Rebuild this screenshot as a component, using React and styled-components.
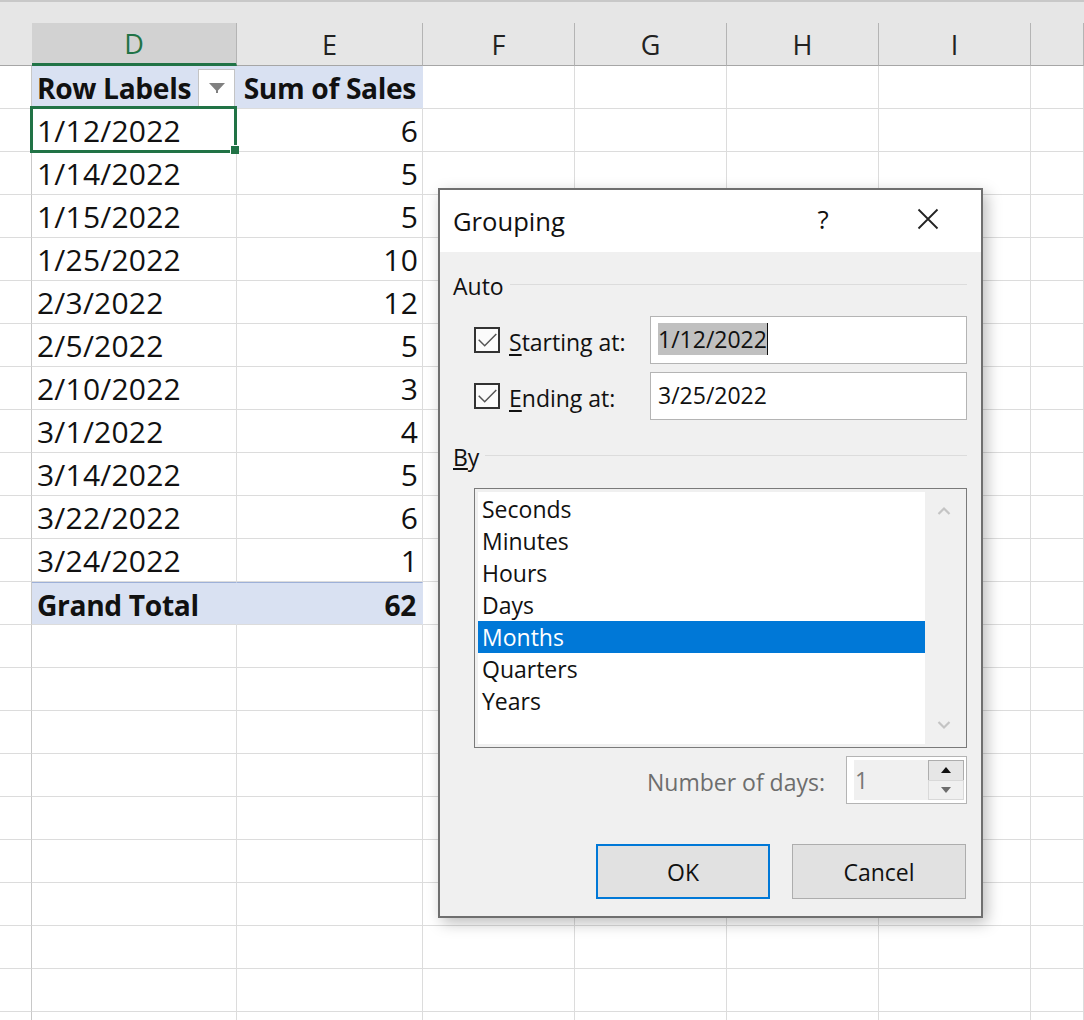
import React from 'react'
import styled, { createGlobalStyle } from 'styled-components'

const COLUMNS = ['D', 'E', 'F', 'G', 'H', 'I', '']
const ROWS = [
  ['1/12/2022', '6'],
  ['1/14/2022', '5'],
  ['1/15/2022', '5'],
  ['1/25/2022', '10'],
  ['2/3/2022', '12'],
  ['2/5/2022', '5'],
  ['2/10/2022', '3'],
  ['3/1/2022', '4'],
  ['3/14/2022', '5'],
  ['3/22/2022', '6'],
  ['3/24/2022', '1'],
]
const EMPTY_BELOW = 10
const UNITS = ['Seconds', 'Minutes', 'Hours', 'Days', 'Months', 'Quarters', 'Years']

const GlobalStyle = createGlobalStyle`
  html, body { margin: 0; padding: 0; background: #fff; }
  body { width: 1084px; height: 1020px; overflow: hidden; font-family: "Open Sans", "Noto Sans", sans-serif; }
`

const Page = styled.div`
  position: relative;
  width: 1084px;
  height: 1020px;
  overflow: hidden;
  background: #fff;
`

const TopStrip = styled.div`
  height: 23px;
  background: #e6e6e6;
  border-top: 2px solid #c8c8c8;
  box-sizing: border-box;
`

const Sheet = styled.div`
  display: grid;
  grid-template-columns: 32px 205px 186px 152px 152px 152px 152px 53px;
  grid-auto-rows: 43px;
`

const Corner = styled.div`
  background: #e6e6e6;
  border-bottom: 1px solid #a6a6a6;
`

const ColumnHead = styled.div`
  display: flex;
  align-items: center;
  justify-content: center;
  box-sizing: border-box;
  font-size: 27px;
  background: ${p => (p.$active ? '#d2d2d2' : '#e6e6e6')};
  color: ${p => (p.$active ? '#217346' : '#222')};
  border-right: 1px solid #b4b4b4;
  border-bottom: ${p => (p.$active ? '3px solid #217346' : '1px solid #a6a6a6')};
`

const RowHead = styled.div`
  border-right: 1px solid #c8c8c8;
  border-bottom: 1px solid #dcdcdc;
  background: #fff;
`

const Cell = styled.div`
  position: relative;
  display: flex;
  align-items: center;
  box-sizing: border-box;
  padding: ${p => (p.$bold ? '2px 6px 0 5px' : '0 4px 0 5px')};
  font-size: ${p => (p.$bold ? 28.2 : 30)}px;
  letter-spacing: ${p => (p.$bold ? -0.35 : 0.2)}px;
  color: #111;
  white-space: nowrap;
  justify-content: ${p => (p.$right ? 'flex-end' : 'flex-start')};
  font-weight: ${p => (p.$bold ? 700 : 400)};
  background: ${p => p.$fill || '#fff'};
  border-right: 1px solid ${p => (p.$fill ? p.$fill : '#dcdcdc')};
  border-bottom: 1px solid #dcdcdc;
  border-top: ${p => (p.$topRule ? '1px solid #9db0d8' : 'none')};
`

const FilterButton = styled.span`
  position: absolute;
  right: 1px;
  top: 3px;
  width: 37px;
  height: 37px;
  display: flex;
  align-items: center;
  justify-content: center;
  box-sizing: border-box;
  background: #fff;
  border: 1px solid #c4c4c4;
  border-bottom: none;
`

const FilterIcon = styled.svg`
  width: 16px;
  height: 10px;
`

const Selection = styled.div`
  position: absolute;
  z-index: 2;
  left: -2px;
  top: -3px;
  right: -1px;
  bottom: -2px;
  border: 3px solid #217346;
  pointer-events: none;

  &::after {
    content: '';
    position: absolute;
    right: -5px;
    bottom: -4px;
    width: 9px;
    height: 9px;
    background: #217346;
    box-sizing: border-box;
    border-left: 1px solid #fff;
    border-top: 1px solid #fff;
  }
`

const Dialog = styled.div`
  position: absolute;
  z-index: 3;
  left: 438px;
  top: 188px;
  width: 545px;
  height: 730px;
  box-sizing: border-box;
  display: flex;
  flex-direction: column;
  background: #f0f0f0;
  border: 2px solid #6f6f6f;
  box-shadow: 4px 5px 14px rgba(0, 0, 0, 0.26);
  color: #111;
  font-size: 23px;
`

const TitleBar = styled.div`
  height: 62px;
  flex: none;
  display: flex;
  align-items: center;
  background: #fff;
  padding-left: 13px;
`

const Title = styled.div`
  font-size: 25.6px;
  flex: 1;
`

const HelpMark = styled.div`
  font-size: 26px;
  width: 20px;
  margin-right: 84px;
  margin-top: -4px;
  text-align: center;
`

const CloseButton = styled.svg`
  width: 22px;
  height: 22px;
  margin-right: 42px;
  margin-top: -4px;
`

const Body = styled.div`
  flex: 1;
  display: flex;
  flex-direction: column;
  padding: 15px 14px 0 13px;
`

const SectionHead = styled.div`
  display: flex;
  align-items: center;
  gap: 6px;
  height: 36px;
  margin-top: ${p => p.$gap || 0}px;

  & > span { margin-top: 2px; }

  &::after {
    content: '';
    flex: 1;
    height: 1px;
    background: #dcdcdc;
    margin-top: -2px;
  }
`

const DateRow = styled.div`
  display: flex;
  align-items: center;
  height: 48px;
  margin-left: 21px;
  margin-top: ${p => p.$gap || 0}px;
`

const CheckBox = styled.svg`
  width: 26px;
  height: 26px;
  flex: none;
  margin: 0 9px 0 0;
`

const FieldLabel = styled.label`
  width: 141px;
  flex: none;
  margin-top: 3px;
  white-space: nowrap;
  u { text-underline-offset: 3px; }
`

const DateField = styled.div`
  flex: 1;
  height: 48px;
  box-sizing: border-box;
  display: flex;
  align-items: center;
  padding: 0 0 2px 7px;
  background: #fff;
  border: 1px solid #b4b4b4;
`

const Selected = styled.span`
  background: #c0c0c0;
  border-right: 1px solid #111;
  line-height: 32px;
`

const ListBox = styled.div`
  display: flex;
  height: 260px;
  margin-left: 21px;
  margin-top: 14px;
  box-sizing: border-box;
  border: 1px solid #7a7a7a;
  padding: 3px;
`

const ListItems = styled.div`
  flex: 1;
  background: #fff;
  padding-top: 1px;
`

const ListItem = styled.div`
  height: 32px;
  line-height: 32px;
  padding-left: 4px;
  color: ${p => (p.$selected ? '#fff' : '#111')};
  background: ${p => (p.$selected ? '#0078d7' : 'transparent')};
`

const ScrollTrack = styled.div`
  width: 38px;
  display: flex;
  flex-direction: column;
  justify-content: space-between;
  align-items: center;
  padding: 14px 0;
  box-sizing: border-box;
  background: #f0f0f0;
`

const ScrollIcon = styled.svg`
  width: 14px;
  height: 10px;
`

const DaysRow = styled.div`
  display: flex;
  align-items: center;
  justify-content: flex-end;
  margin-top: 8px;
  gap: 21px;
`

const DaysLabel = styled.div`
  color: #6d6d6d;
  margin-top: 4px;
`

const Spinner = styled.div`
  width: 121px;
  height: 48px;
  box-sizing: border-box;
  display: flex;
  align-items: stretch;
  background: #fff;
  border: 1px solid #b4b4b4;
  padding: 3px 2px 3px 7px;
`

const SpinValue = styled.div`
  flex: 1;
  display: flex;
  align-items: center;
  padding-left: 1px;
  color: #777;
  background: #f0f0f0;
`

const SpinButtons = styled.div`
  width: 36px;
  display: flex;
  flex-direction: column;
`

const SpinButton = styled.div`
  flex: 1;
  display: flex;
  align-items: center;
  justify-content: center;
  box-sizing: border-box;
  background: ${p => (p.$on ? '#e6e6e6' : '#f0f0f0')};
  border: 1px solid ${p => (p.$on ? '#adadad' : '#d9d9d9')};
  margin-top: ${p => (p.$on ? 0 : -1)}px;
`

const SpinArrow = styled.span`
  width: 0;
  height: 0;
  border-left: 5px solid transparent;
  border-right: 5px solid transparent;
  ${p => (p.$up ? `border-bottom: 6px solid #111;` : `border-top: 6px solid #6d6d6d;`)}
`

const ButtonRow = styled.div`
  display: flex;
  justify-content: flex-end;
  gap: 22px;
  margin-top: 40px;
  padding-right: 1px;
`

const DialogButton = styled.div`
  width: 174px;
  height: 55px;
  box-sizing: border-box;
  display: flex;
  align-items: center;
  justify-content: center;
  background: #e1e1e1;
  border: ${p => (p.$primary ? '2px solid #0078d7' : '1px solid #adadad')};
`

const Check = () => (
  <CheckBox viewBox="0 0 26 26">
    <rect x="1" y="1" width="24" height="24" fill="#fbfbfb" stroke="#333" strokeWidth="2" />
    <path d="M4.7 12.7l6 6L22.3 7" fill="none" stroke="#555" strokeWidth="1.5" />
  </CheckBox>
)

const App = () => {
  return (
    <Page>
      <GlobalStyle />
      <TopStrip />
      <Sheet>
        <Corner />
        {COLUMNS.map((name, i) => (
          <ColumnHead key={i} $active={name === 'D'}>{name}</ColumnHead>
        ))}

        <RowHead />
        <Cell $fill="#d9e1f2" $bold>
          Row Labels
          <FilterButton>
            <FilterIcon viewBox="0 0 16 10">
              <path d="M0 0h16L9 7.5V10H7V7.5z" fill="#808080" />
            </FilterIcon>
          </FilterButton>
        </Cell>
        <Cell $fill="#d9e1f2" $bold $right>Sum of Sales</Cell>
        {COLUMNS.slice(2).map((_, i) => <Cell key={i} />)}

        {ROWS.map(([date, sales], r) => (
          <React.Fragment key={date}>
            <RowHead />
            <Cell>
              {date}
              {r === 0 && <Selection />}
            </Cell>
            <Cell $right>{sales}</Cell>
            {COLUMNS.slice(2).map((_, i) => <Cell key={i} />)}
          </React.Fragment>
        ))}

        <RowHead />
        <Cell $fill="#d9e1f2" $bold $topRule>Grand Total</Cell>
        <Cell $fill="#d9e1f2" $bold $topRule $right>62</Cell>
        {COLUMNS.slice(2).map((_, i) => <Cell key={i} />)}

        {Array.from({ length: EMPTY_BELOW }).map((_, r) => (
          <React.Fragment key={r}>
            <RowHead />
            {COLUMNS.map((_, i) => <Cell key={i} />)}
          </React.Fragment>
        ))}
      </Sheet>

      <Dialog>
        <TitleBar>
          <Title>Grouping</Title>
          <HelpMark>?</HelpMark>
          <CloseButton viewBox="0 0 22 22">
            <path d="M1.5 1.5l19 19M20.5 1.5l-19 19" stroke="#222" strokeWidth="1.8" fill="none" />
          </CloseButton>
        </TitleBar>
        <Body>
          <SectionHead><span>Auto</span></SectionHead>
          <DateRow $gap={13}>
            <Check />
            <FieldLabel><u>S</u>tarting at:</FieldLabel>
            <DateField><Selected>1/12/2022</Selected></DateField>
          </DateRow>
          <DateRow $gap={8}>
            <Check />
            <FieldLabel><u>E</u>nding at:</FieldLabel>
            <DateField>3/25/2022</DateField>
          </DateRow>
          <SectionHead $gap={18}><span><u>B</u>y</span></SectionHead>
          <ListBox>
            <ListItems>
              {UNITS.map(unit => (
                <ListItem key={unit} $selected={unit === 'Months'}>{unit}</ListItem>
              ))}
            </ListItems>
            <ScrollTrack>
              <ScrollIcon viewBox="0 0 14 10">
                <path d="M1.5 8L7 2.5 12.5 8" fill="none" stroke="#c4c4c4" strokeWidth="2.2" />
              </ScrollIcon>
              <ScrollIcon viewBox="0 0 14 10">
                <path d="M1.5 2L7 7.5 12.5 2" fill="none" stroke="#c4c4c4" strokeWidth="2.2" />
              </ScrollIcon>
            </ScrollTrack>
          </ListBox>
          <DaysRow>
            <DaysLabel>Number of days:</DaysLabel>
            <Spinner>
              <SpinValue>1</SpinValue>
              <SpinButtons>
                <SpinButton $on><SpinArrow $up /></SpinButton>
                <SpinButton><SpinArrow /></SpinButton>
              </SpinButtons>
            </Spinner>
          </DaysRow>
          <ButtonRow>
            <DialogButton $primary>OK</DialogButton>
            <DialogButton>Cancel</DialogButton>
          </ButtonRow>
        </Body>
      </Dialog>
    </Page>
  )
}

export default App
